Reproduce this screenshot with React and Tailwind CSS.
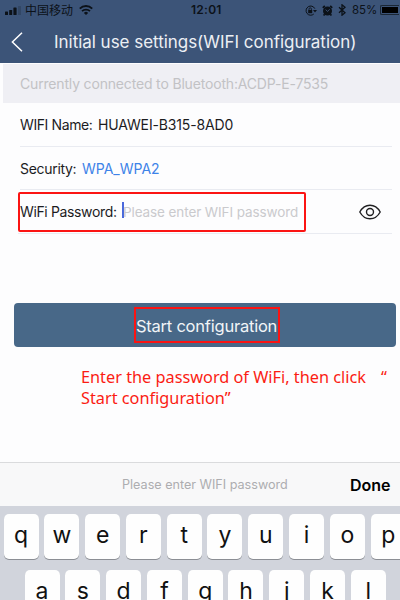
import { useState } from "react";

const topKeys = ["q", "w", "e", "r", "t", "y", "u", "i", "o", "p"];
const homeKeys = ["a", "s", "d", "f", "g", "h", "j", "k", "l"];

const StatusBar = () => {
  return (
    <div className="flex h-5 items-center pl-[5px] text-[#0c1219]">
      <svg className="shrink-0" width="17" height="9" viewBox="0 0 17 9" fill="currentColor">
        <rect x="0" y="5.5" width="3" height="3.5" rx="0.6" />
        <rect x="4.2" y="4" width="3" height="5" rx="0.6" />
        <rect x="8.4" y="1.5" width="3.2" height="7.5" rx="0.6" />
        <rect x="13" y="0" width="3" height="9" rx="0.6" opacity="0.2" />
      </svg>
      <span className="ml-[3px] w-[48px] shrink-0 whitespace-nowrap font-['Noto_Sans_CJK_SC',sans-serif] text-[12px] leading-5">
        中国移动
      </span>
      <svg className="ml-[6px] shrink-0" width="14" height="10" viewBox="0 0 14 10" fill="none" stroke="currentColor">
        <path d="M0.8 3.6a9 9 0 0 1 12.4 0" strokeWidth="2" />
        <path d="M3 6.2a5.8 5.8 0 0 1 8 0" strokeWidth="1.8" />
        <path d="M7 10L4.9 7.9a3 3 0 0 1 4.2 0z" fill="currentColor" stroke="none" />
      </svg>
      <span className="ml-[98px] w-[32px] shrink-0 whitespace-nowrap text-[12px] font-semibold leading-5 tracking-[0.25px]">
        12:01
      </span>
      <svg className="ml-[82px] shrink-0" width="12" height="11" viewBox="0 0 12 11" fill="none" stroke="currentColor">
        <path d="M9.8 3.6A4.6 4.6 0 1 0 8.8 9" strokeWidth="1" />
        <path d="M8 5h4L10 7.6z" fill="currentColor" stroke="none" />
        <rect x="3.2" y="5" width="4" height="3.2" fill="currentColor" stroke="none" />
        <path d="M4 5V4a1.2 1.2 0 0 1 2.4 0v1" strokeWidth="0.8" />
      </svg>
      <svg className="ml-[5px] shrink-0" width="11" height="11" viewBox="0 0 11 11" fill="none">
        <circle cx="5.5" cy="6" r="4.5" fill="currentColor" />
        <path d="M0.8 2.8l2-2M10.2 2.8l-2-2M2.6 9.3l-1 1.2M8.4 9.3l1 1.2" stroke="currentColor" strokeWidth="1.7" />
        <path d="M3.6 4.6l2.1 1.9 2-2.3" stroke="#3c5478" strokeWidth="0.9" />
      </svg>
      <svg className="ml-[5px] shrink-0" width="8" height="12" viewBox="0 0 8 12" fill="none" stroke="currentColor" strokeWidth="1.3">
        <path d="M1 3.3l6 5.4-3 2.5V0.8l3 2.5-6 5.4" />
      </svg>
      <span className="ml-[6px] w-[25px] shrink-0 whitespace-nowrap text-[11.5px] leading-5">
        85%
      </span>
      <div className="ml-[3px] h-[10px] w-[19px] shrink-0 rounded-l-[2px] border border-r-0 border-[#1b2735] py-px pl-px">
        <div className="h-full w-[16px] bg-black" />
      </div>
    </div>
  );
};

const Key = ({ label }) => {
  return (
    <button className="flex h-[45px] w-[35px] shrink-0 items-center justify-center rounded-[5px] bg-[#fefefe] pb-[3px] text-[23px] text-[#111] shadow-[0_1px_0_#8b8e94]">
      {label}
    </button>
  );
};

const App = () => {
  const [password, setPassword] = useState("");

  return (
    <div className="flex h-[600px] w-[400px] flex-col overflow-hidden bg-[#fdfdfe] font-['Inter',sans-serif] text-[#1c1c1e]">
      <header className="h-[63px] shrink-0 bg-[#3c5478]">
        <StatusBar />
        <div className="flex h-[43px] items-center">
          <svg className="ml-[11px]" width="12" height="20" viewBox="0 0 12 20" fill="none" stroke="#fff" strokeWidth="1.5">
            <path d="M11 0.8L1.4 10 11 19.2" />
          </svg>
          <h1 className="ml-[31px] whitespace-nowrap text-[17px] leading-5 tracking-[-0.03px] text-[#eceff4]">
            Initial use settings(WIFI configuration)
          </h1>
        </div>
      </header>

      <div className="ml-[3px] mt-px flex h-[39px] shrink-0 items-center bg-[#efeff4] pl-[17px] text-[14px] tracking-[-0.17px] text-[#c2c2c5]">
        <span className="whitespace-nowrap">Currently connected to Bluetooth:ACDP-E-7535</span>
      </div>

      <div className="ml-5 mr-2 flex h-11 shrink-0 items-center border-b border-[#e9ebf1] text-[14px]">
        <span className="w-[78px] whitespace-nowrap tracking-[-0.4px]">WIFI Name:</span>
        <span className="whitespace-nowrap tracking-[-0.15px]">HUAWEI-B315-8AD0</span>
      </div>
      <div className="ml-5 mr-2 flex h-[43px] shrink-0 items-center border-b border-[#e9ebf1] text-[14px]">
        <span className="w-[62px] whitespace-nowrap tracking-[-0.3px]">Security:</span>
        <span className="whitespace-nowrap text-[#3d83e8]">WPA_WPA2</span>
      </div>
      <div className="ml-[18px] mr-2 flex h-11 shrink-0 items-center border-b border-[#e9ebf1] text-[14px]">
        <label className="flex h-10 w-[288px] shrink-0 items-center rounded-[2px] border-2 border-[#fb1413]">
          <span className="w-[102px] shrink-0 whitespace-nowrap tracking-[-0.36px]">WiFi Password:</span>
          <span className="mb-1 h-4 w-[2px] shrink-0 bg-[#4b68dc]" />
          <input
            className="-ml-px w-[180px] bg-transparent pt-px text-[13.5px] tracking-[-0.1px] outline-none placeholder:text-[#cacacd]"
            placeholder="Please enter WIFI password"
            value={password}
            onChange={(e) => setPassword(e.target.value)}
          />
        </label>
        <svg className="ml-[53px]" width="22" height="16" viewBox="0 0 22 16" fill="none" stroke="#202022" strokeWidth="1.4">
          <path d="M0.8 8C3 4 6.6 1.2 11 1.2S19 4 21.2 8C19 12 15.4 14.8 11 14.8S3 12 0.8 8z" />
          <circle cx="11" cy="8" r="3.5" />
        </svg>
      </div>

      <button className="ml-[14px] mt-[69px] flex h-11 w-[382px] shrink-0 items-center justify-center rounded-[4px] bg-[#486888] pl-[3px] text-[16.5px] tracking-[-0.22px] text-[#f1f4f7]">
        <span className="flex h-9 w-[146px] items-center justify-center whitespace-nowrap border-2 border-[#fb1413] pt-0.5">
          Start configuration
        </span>
      </button>
      <p className="ml-[81px] mt-[20px] whitespace-nowrap font-['Noto_Sans',sans-serif] text-[16.3px] leading-[21px] text-[#fb1c13]">
        Enter the password of WiFi, then click
        <span className="ml-[15px]">“</span>
        <br />
        Start configuration”
      </p>

      <div className="mt-auto flex h-11 shrink-0 items-center border-t border-[#dadbdd] bg-[#f8f8f9]">
        <span className="ml-[122px] w-[228px] whitespace-nowrap pt-px text-[12.6px] text-[#adadb0]">
          Please enter WIFI password
        </span>
        <button className="text-[16px] font-semibold text-black">Done</button>
      </div>
      <div className="flex h-[94px] shrink-0 flex-col gap-[11px] overflow-hidden bg-[#d1d4dc] pt-2">
        <div className="flex gap-[5.8px] pl-[3.5px]">
          {topKeys.map((key) => (
            <Key key={key} label={key} />
          ))}
        </div>
        <div className="flex gap-[5.8px] pl-[24.5px]">
          {homeKeys.map((key) => (
            <Key key={key} label={key} />
          ))}
        </div>
      </div>
    </div>
  );
};

export default App;
